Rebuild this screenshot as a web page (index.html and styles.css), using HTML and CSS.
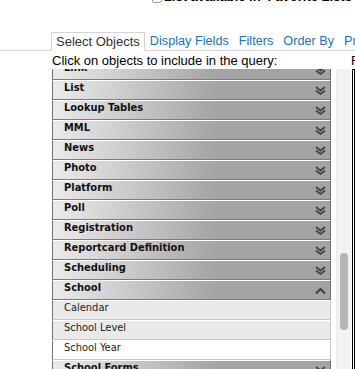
FILE: index.html
```html
<!DOCTYPE html>
<html lang="en">
<head>
	<meta charset="UTF-8">
	<title>Query Builder</title>
	<link rel="stylesheet" href="styles.css">
</head>
<body>
	<div class="favRow">
		<span class="favBox"></span><b>List available in 'Favorite Lists'</b>
	</div>
	<ul class="tabs">
		<li class="active">Select Objects</li>
		<li>Display Fields</li>
		<li>Filters</li>
		<li>Order By</li>
		<li>Preview</li>
	</ul>
	<div class="panes">
		<div class="leftPane">
			<div class="hint">Click on objects to include in the query:</div>
			<div class="listWrap">
				<div class="viewport">
					<div class="objList">
						<div class="obj">Link<i class="chev"></i></div>
						<div class="obj">List<i class="chev"></i></div>
						<div class="obj">Lookup Tables<i class="chev"></i></div>
						<div class="obj">MML<i class="chev"></i></div>
						<div class="obj">News<i class="chev"></i></div>
						<div class="obj">Photo<i class="chev"></i></div>
						<div class="obj">Platform<i class="chev"></i></div>
						<div class="obj">Poll<i class="chev"></i></div>
						<div class="obj">Registration<i class="chev"></i></div>
						<div class="obj">Reportcard Definition<i class="chev"></i></div>
						<div class="obj">Scheduling<i class="chev"></i></div>
						<div class="obj open">School<i class="chev up"></i></div>
						<div class="sub">Calendar</div>
						<div class="sub">School Level</div>
						<div class="sub hover">School Year</div>
						<div class="obj">School Forms<i class="chev"></i></div>
						<div class="obj">Search<i class="chev"></i></div>
					</div>
				</div>
				<div class="track"><div class="thumb"></div></div>
			</div>
		</div>
		<div class="rightPane">
			<div class="hint">Fields</div>
			<div class="fieldBox"></div>
		</div>
	</div>
	<script src="app.js"></script>
</body>
</html>
```

FILE: styles.css
```css
body{
	margin:0;
	font:13px 'Liberation Sans', Arial, sans-serif;
	color:#000;
	overflow:hidden;
}
.favRow{
	margin-top:-10px;
	height:14px;
	line-height:14px;
	padding-left:152px;
	white-space:nowrap;
	display:flex;
	align-items:flex-end;
}
.favRow b{
	margin-left:2px;
}
.favBox{
	display:inline-block;
	width:10px;
	height:10px;
	border:1px solid #9a9a9a;
	border-radius:2px;
	margin-bottom:1px;
}
.tabs{
	list-style:none;
	margin:28px 0 0 0;
	padding:0 0 0 51px;
	display:flex;
	border-bottom:1px solid #d4d4d4;
	white-space:nowrap;
}
.tabs li{
	padding:1px 4px 1px 4px;
	border:1px solid transparent;
	line-height:15px;
	color:#1a73c4;
	font-size:12.7px;
	margin-bottom:-1px;
}
.tabs li.active{
	color:#333;
	font-size:13px;
	border-color:#d4d4d4;
	border-bottom-color:#fff;
	padding:1px 4px;
}
.panes{
	display:flex;
	padding-left:52px;
}
.leftPane{
	width:299px;
	flex-shrink:0;
}
.hint{
	padding-top:2px;
	line-height:16px;
	white-space:nowrap;
}
.listWrap{
	display:flex;
	height:320px;
}
.viewport{
	width:280px;
	overflow:hidden;
}
.objList{
	margin-top:-9px;
}
.obj, .sub{
	position:relative;
	height:18px;
	line-height:18px;
	padding-left:11px;
	border-top:1px solid #fff;
	border-bottom:1px solid #7c7c7c;
	border-left:1px solid #707070;
	border-right:1px solid #6c6c6c;
	font:bold 11px 'DejaVu Sans Condensed', Tahoma, sans-serif;
	color:#111;
	background:linear-gradient(to right, #ebebeb 0, #a3a3a3 165px, #a3a3a3 100%);
}
.sub{
	font-weight:normal;
	color:#222;
	background:#e9e9e9;
	border-bottom-color:#c8c8c8;
	border-right-color:#c8c8c8;
}
.sub.hover{
	background:#fff;
}
.chev{
	position:absolute;
	right:4px;
	top:5px;
	width:11px;
	height:9px;
	background:url("data:image/svg+xml,%3Csvg xmlns='http://www.w3.org/2000/svg' width='11' height='9'%3E%3Cpolyline points='1,1 5.5,4.5 10,1' fill='none' stroke='%23444' stroke-width='1.8'/%3E%3Cpolyline points='1,4.5 5.5,8 10,4.5' fill='none' stroke='%23444' stroke-width='1.8'/%3E%3C/svg%3E") no-repeat;
}
.chev.up{
	background:url("data:image/svg+xml,%3Csvg xmlns='http://www.w3.org/2000/svg' width='11' height='9'%3E%3Cpolyline points='1,7.5 5.5,3 10,7.5' fill='none' stroke='%23444' stroke-width='2.2'/%3E%3C/svg%3E") no-repeat;
}
.track{
	width:15px;
	margin-left:5px;
	background:#f2f2f2;
	border-left:1px solid #ececec;
	box-sizing:border-box;
}
.thumb{
	width:8px;
	height:77px;
	margin:184px 0 0 3px;
	border-radius:4px;
	background:#b6b6b6;
}
.rightPane{
	flex:1;
	min-width:0;
}
.fieldBox{
	margin-left:1px;
	height:320px;
	border:1px solid #000;
}
```

FILE: app.js
```js
(function(){
	var subs = document.querySelectorAll('.sub');
	for(var i=0;i<subs.length;i++){
		subs[i].addEventListener('mouseenter',function(){
			for(var j=0;j<subs.length;j++){
				subs[j].classList.remove('hover');
			}
			this.classList.add('hover');
		},false);
	}
})();
```
